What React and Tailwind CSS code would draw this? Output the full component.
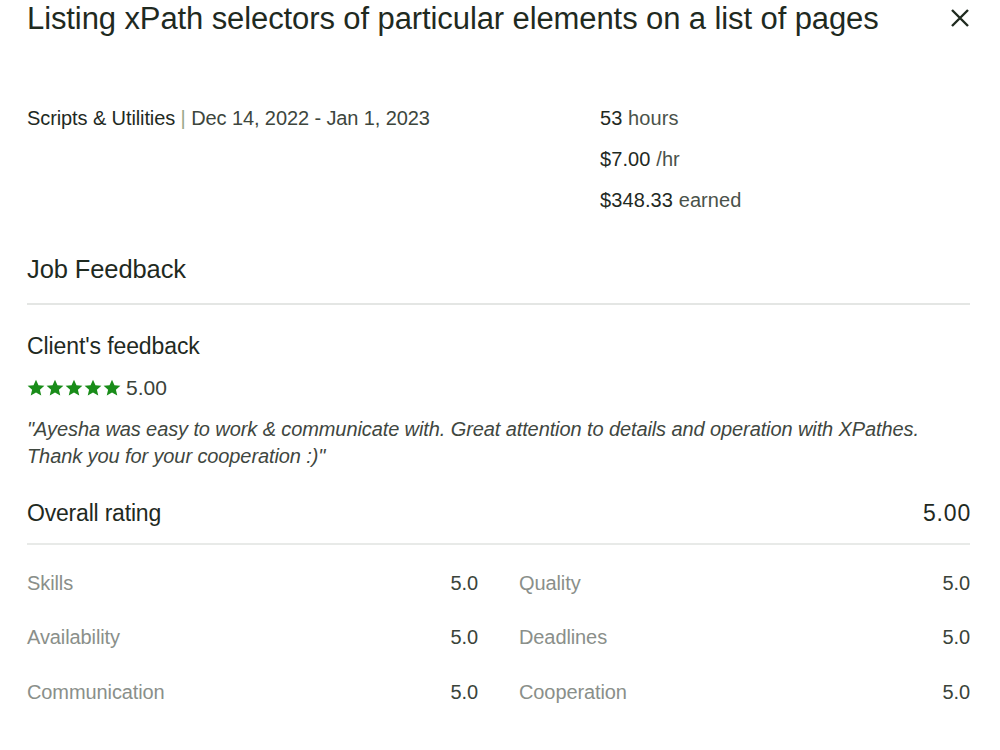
import React from 'react'

const Star = () => (
  <svg viewBox="0 0 24 24" className="w-[18px] h-[18px] fill-[#198c19]">
    <path d="M12 1l3.3 7.2 7.9.7-6 5.3 1.8 7.8L12 18l-7 4 1.8-7.8-6-5.3 7.9-.7z" />
  </svg>
)

const ratings = [
  ['Skills', '5.0', 'Quality', '5.0'],
  ['Availability', '5.0', 'Deadlines', '5.0'],
  ['Communication', '5.0', 'Cooperation', '5.0'],
]

export default function App() {
  return (
    <div className="w-[1000px] h-[750px] bg-white text-[#1f2a1f] font-['Liberation_Sans',Arial,sans-serif] pl-[27px] pr-[30px] overflow-hidden">
      <div className="flex items-center justify-between h-[36px]">
        <h1 className="text-[31px] tracking-[-0.1px] leading-none">Listing xPath selectors of particular elements on a list of pages</h1>
        <svg viewBox="0 0 20 20" className="w-[20px] h-[20px] stroke-[#1f2a1f]" strokeWidth="2.4" fill="none">
          <path d="M2 2l16 16M18 2L2 18" />
        </svg>
      </div>

      <div className="flex mt-[72px]">
        <div className="w-[573px] text-[20px] tracking-[-0.1px] leading-none">
          Scripts &amp; Utilities <span className="text-[#9aa88a]">|</span> <span className="text-[#3d463d]">Dec 14, 2022 - Jan 1, 2023</span>
        </div>
        <div className="flex flex-col gap-[21px] text-[20px] tracking-[0.1px] leading-none">
          <div>53 <span className="text-[#4a524a]">hours</span></div>
          <div>$7.00 <span className="text-[#4a524a]">/hr</span></div>
          <div>$348.33 <span className="text-[#4a524a]">earned</span></div>
        </div>
      </div>

      <h2 className="text-[25.5px] tracking-[-0.1px] leading-none mt-[47px]">Job Feedback</h2>
      <div className="border-t-2 border-[#e4e6e4] mt-[20px]" />

      <h3 className="text-[23px] tracking-[-0.1px] leading-none mt-[30px]">Client&apos;s feedback</h3>
      <div className="flex items-center gap-[5px] mt-[19px] h-[22px]">
        <div className="flex gap-[1px]">
          <Star /><Star /><Star /><Star /><Star />
        </div>
        <span className="text-[21px] leading-none text-[#3a423a]">5.00</span>
      </div>
      <p className="italic text-[20px] tracking-[-0.1px] leading-[27px] text-[#3f473f] mt-[17px]">
        "Ayesha was easy to work &amp; communicate with. Great attention to details and operation with XPathes.<br />
        Thank you for your cooperation :)"
      </p>

      <div className="flex justify-between items-center mt-[32px] text-[23px] tracking-[-0.2px] leading-none">
        <span>Overall rating</span>
        <span className="tracking-[0.8px] mr-[-1px]">5.00</span>
      </div>
      <div className="border-t-2 border-[#e8eae8] mt-[18px]" />

      <div className="grid grid-cols-2 gap-x-[41px] gap-y-[32.5px] mt-[27px] text-[20px] tracking-[-0.1px] leading-[22px]">
        {ratings.flatMap((r, i) => [
          <div key={i + 'a'} className="flex justify-between">
            <span className="text-[#8a8f8a]">{r[0]}</span>
            <span className="text-[#3a433a]">{r[1]}</span>
          </div>,
          <div key={i + 'b'} className="flex justify-between">
            <span className="text-[#8a8f8a]">{r[2]}</span>
            <span className="text-[#3a433a]">{r[3]}</span>
          </div>,
        ])}
      </div>
    </div>
  )
}
